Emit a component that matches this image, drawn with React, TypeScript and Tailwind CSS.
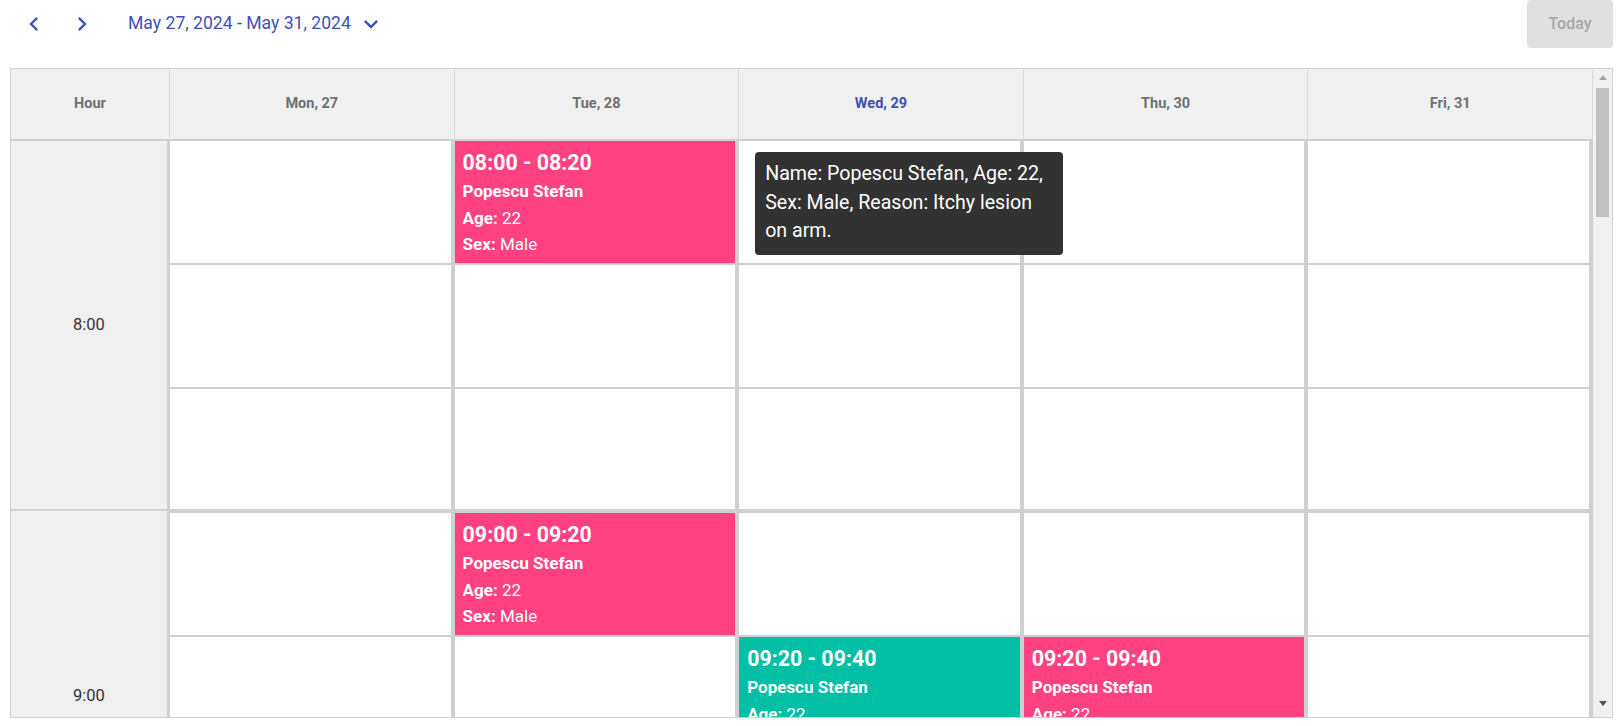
import React from "react";

const LINE = "border-[#d0d0d0]";

function ChevronLeft() {
  return (
    <svg width="28" height="28" viewBox="0 0 24 24" fill="#3f51b5">
      <path d="M15.41 7.41 14 6l-6 6 6 6 1.41-1.41L10.83 12z" />
    </svg>
  );
}
function ChevronRight() {
  return (
    <svg width="28" height="28" viewBox="0 0 24 24" fill="#3f51b5">
      <path d="M10 6 8.59 7.41 13.17 12l-4.58 4.59L10 18l6-6z" />
    </svg>
  );
}
function ExpandMore() {
  return (
    <svg width="28" height="28" viewBox="0 0 24 24" fill="#3f51b5">
      <path d="M16.59 8.59 12 13.17 7.41 8.59 6 10l6 6 6-6z" />
    </svg>
  );
}

type Ev = { time: string; color: string };

function EventCard({ ev }: { ev: Ev }) {
  return (
    <div className={`h-full w-full overflow-hidden ${ev.color} px-[8px] pt-[7px] text-white`}>
      <div className="text-[21.4px] font-bold leading-[30px]">{ev.time}</div>
      <div className="text-[17px] font-bold leading-[27px]">Popescu Stefan</div>
      <div className="text-[17px] leading-[26px]">
        <span className="font-bold">Age:</span> 22
      </div>
      <div className="text-[17px] leading-[27px]">
        <span className="font-bold">Sex:</span> Male
      </div>
    </div>
  );
}

function Tooltip() {
  return (
    <div className="absolute left-[16px] top-[11px] z-10 w-[308px] rounded-[4px] bg-[#323232] px-[10px] pb-[9px] pt-[8px] text-[19.6px] leading-[28.5px] text-white">
      <div className="whitespace-nowrap">Name: Popescu Stefan, Age: 22,</div>
      <div className="whitespace-nowrap">Sex: Male, Reason: Itchy lesion</div>
      <div className="whitespace-nowrap">on arm.</div>
    </div>
  );
}

const PINK = "bg-[#ff4081]";
const TEAL = "bg-[#00bfa5]";

// events[hourIndex][dayIndex][slotIndex]
const events: Record<string, Ev> = {
  "0-1-0": { time: "08:00 - 08:20", color: PINK },
  "1-1-0": { time: "09:00 - 09:20", color: PINK },
  "1-2-1": { time: "09:20 - 09:40", color: TEAL },
  "1-3-1": { time: "09:20 - 09:40", color: PINK },
};

const days = ["Mon, 27", "Tue, 28", "Wed, 29", "Thu, 30", "Fri, 31"];
const hours = ["8:00", "9:00", "10:00"];

export default function App() {
  return (
    <div className="h-[726px] w-[1620px] overflow-hidden bg-white font-[Roboto,sans-serif]">
      {/* Top bar */}
      <div className="flex h-[68px] items-start pl-[10px] pr-[7px]">
        <div className="flex h-[48px] items-center">
          <button className="flex h-[48px] w-[48px] items-center justify-center">
            <ChevronLeft />
          </button>
          <button className="flex h-[48px] w-[48px] items-center justify-center">
            <ChevronRight />
          </button>
          <button className="ml-[22px] flex items-center">
            <span className="text-[17.6px] leading-none text-[#3f51b5]">May 27, 2024 - May 31, 2024</span>
            <span className="ml-[6px] flex">
              <ExpandMore />
            </span>
          </button>
        </div>
        <div className="flex-1" />
        <button className="flex h-[48px] w-[86px] items-center justify-center rounded-[4px] bg-[#e0e0e0] text-[16px] font-medium text-[#a6a6a6]">
          Today
        </button>
      </div>

      {/* Scheduler */}
      <div className={`ml-[10px] flex h-[650px] w-[1603px] border ${LINE}`}>
        <div className="flex min-w-0 flex-1 flex-col overflow-hidden">
          {/* Header */}
          <div className={`flex h-[72px] shrink-0 border-b-2 ${LINE} bg-[#f0f0f0]`}>
            <div className="flex w-[159px] shrink-0 items-center justify-center border-r border-[#dadada] text-[14.5px] font-bold text-[#707070]">
              Hour
            </div>
            {days.map((d, i) => (
              <div
                key={d}
                className={`flex flex-1 items-center justify-center border-r border-[#dadada] text-[14.5px] font-bold ${
                  i === 2 ? "text-[#3f51b5]" : "text-[#707070]"
                }`}
              >
                {d}
              </div>
            ))}
          </div>
          {/* Body */}
          <div className="flex min-h-0 flex-1 flex-col overflow-hidden">
            {hours.map((h, hi) => (
              <div key={h} className="flex shrink-0">
                <div
                  className={`flex w-[159px] shrink-0 items-center justify-center border-r-[3px] ${LINE} bg-[#f0f0f0] text-[16.5px] text-[#333333] ${
                    hi > 0 ? "border-t-2" : ""
                  }`}
                >
                  {h}
                </div>
                {days.map((d, di) => (
                  <div
                    key={d}
                    className={`flex min-w-0 flex-1 flex-col border-r-4 ${LINE} ${hi > 0 ? "border-t-4" : ""}`}
                  >
                    {[0, 1, 2].map((s) => {
                      const ev = events[`${hi}-${di}-${s}`];
                      const tip = hi === 0 && di === 2 && s === 0;
                      return (
                        <div
                          key={s}
                          className={`relative shrink-0 bg-white ${s < 2 ? `h-[124px] border-b-2 ${LINE}` : "h-[120px]"}`}
                        >
                          {ev && <EventCard ev={ev} />}
                          {tip && <Tooltip />}
                        </div>
                      );
                    })}
                  </div>
                ))}
              </div>
            ))}
          </div>
        </div>
        {/* Scrollbar */}
        <div className="flex w-[19px] shrink-0 flex-col bg-[#f1f1f1]">
          <div className="flex h-[17px] shrink-0 items-center justify-center">
            <svg width="8" height="5" viewBox="0 0 8 5">
              <path d="M0 5 L4 0 L8 5 Z" fill="#a3a3a3" />
            </svg>
          </div>
          <div className="flex-1 px-[3px] pt-[2px]">
            <div className="h-[129px] w-full bg-[#c1c1c1]" />
          </div>
          <div className="flex h-[22px] shrink-0 items-start justify-center pt-[6px]">
            <svg width="8" height="5" viewBox="0 0 8 5">
              <path d="M0 0 L8 0 L4 5 Z" fill="#505050" />
            </svg>
          </div>
        </div>
      </div>
    </div>
  );
}
